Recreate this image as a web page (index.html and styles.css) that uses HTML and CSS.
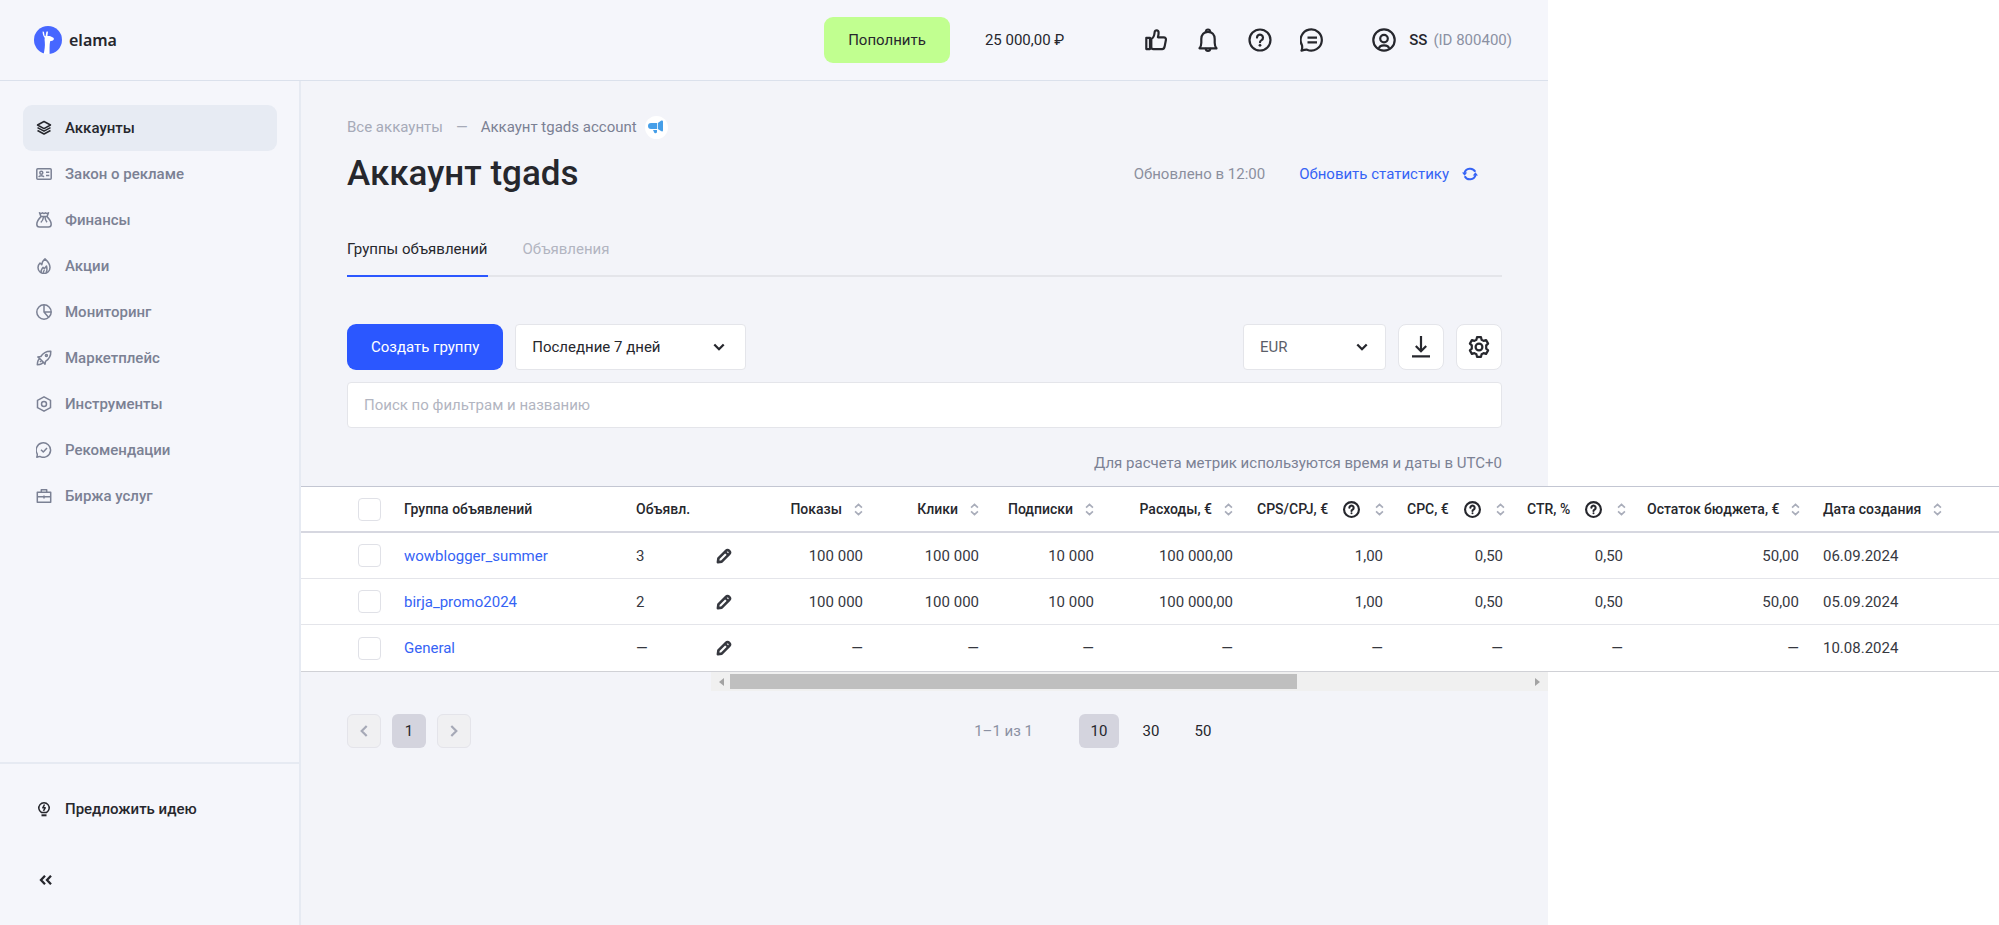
FILE: index.html
```html
<!DOCTYPE html>
<html lang="ru">
<head>
<meta charset="utf-8">
<title>Аккаунт tgads — elama</title>
<meta name="viewport" content="width=device-width, initial-scale=1">
<link rel="stylesheet" href="styles.css">
</head>
<body>
<svg class="sprite" aria-hidden="true">
  <symbol id="i-sort" viewBox="0 0 10 14"><path d="M1.200 5 5 1.400 8.800 5M1.200 9 5 12.600 8.800 9" fill="none" stroke="currentColor" stroke-width="1.900"/></symbol>
  <symbol id="i-help" viewBox="0 0 24 24"><g fill="none" stroke="currentColor" stroke-linecap="round"><circle cx="12" cy="12" r="10.500"/><path d="M9 9.600a3 3 0 1 1 4.600 2.500c-1 .6-1.600 1.100-1.600 2.100"/></g><circle cx="12" cy="17.300" r="1.400" fill="currentColor"/></symbol>
  <symbol id="i-pencil" viewBox="0 0 16 16"><path d="M2.400 10.300 9.900 2.800a2.300 2.300 0 0 1 3.300 3.300l-7.500 7.500-3.800.6z" fill="none" stroke="currentColor" stroke-width="2.600" stroke-linejoin="round"/><path d="m9 3.700 3.300 3.300" stroke="currentColor" stroke-width="2.200"/></symbol>
  <symbol id="i-down" viewBox="0 0 12 8"><path d="m1.300 1.500 4.700 4.700 4.700-4.700" fill="none" stroke="currentColor" stroke-width="2.300"/></symbol>
</svg>
<div class="app">
  <header class="topbar">
    <a class="logo" href="#">
      <svg width="28" height="28" viewBox="0 0 28 28" aria-hidden="true"><circle cx="14" cy="14" r="14" fill="#4767ff"/><path d="M9.700 28c.8-4 1.500-8 1.100-12-.1-1.600-.4-2.900 0-4C9.200 10.500 8.600 8 8.600 5.600c.7-.3 1.300.1 1.400.7l.5 3.200c.3.500.8.700 1.100.6L12.300 6c.3-.7 1.200-.6 1.700-.2l-.6 4.300c1-.3 2.100-.3 3 .2l2.600 1.200c1 .5 1.100 1.600.6 2.300-.7 1.100-2 1.200-3.500 1.500-.7 4-.5 8-.5 12.600z" fill="#fff"/></svg>
      <span>elama</span>
    </a>
    <button class="btn btn-green" type="button">Пополнить</button>
    <span class="balance">25 000,00 ₽</span>
    <nav class="quick" aria-label="Быстрые действия">
      <button class="icon-btn" type="button" aria-label="Оценить"><svg width="24" height="24" viewBox="0 0 24 24" fill="none" stroke="currentColor" stroke-width="2.200" stroke-linejoin="round"><path d="M2.300 9.800h3.700v11.300H2.300zM7.300 11c2.200-1 3-3.300 3.300-6.500.1-3 4-2.900 4 .2 0 1.800-.3 3-.7 4.600h5.800c1.700 0 2.500 1.200 2.200 2.600l-1.400 7.200c-.3 1.300-1 2-2.300 2H9.500c-1 0-1.500-.2-2.200-.7z"/></svg></button>
      <button class="icon-btn" type="button" aria-label="Уведомления"><svg width="24" height="24" viewBox="0 0 24 24" fill="none" stroke="currentColor" stroke-width="2.200" stroke-linejoin="round" stroke-linecap="round"><path d="M3.500 20.300c1.300-1.500 1.800-3 1.800-5.600V11c0-4.400 2.700-7.200 6.700-7.200s6.700 2.800 6.700 7.200v3.700c0 2.600.5 4.100 1.800 5.600z"/><path d="M10 3.600c0-2.800 4-2.800 4 0M9.800 20.800c.2 2.700 4.200 2.700 4.400 0"/></svg></button>
      <button class="icon-btn" type="button" aria-label="Помощь"><svg width="24" height="24" stroke-width="2.200"><use href="#i-help"/></svg></button>
      <button class="icon-btn" type="button" aria-label="Чат"><svg width="24" height="24" viewBox="0 0 24 24" fill="none" stroke="currentColor" stroke-width="2.200" stroke-linejoin="round"><path d="M1.500 22.600c.8-1.500.9-3 .5-5.400A10.600 10.600 0 1 1 7 21.700c-1.800-.1-3.500.3-5.500.9z"/><path d="M7.500 9.700h9.500M7.500 14.300h9.500"/></svg></button>
    </nav>
    <a class="user" href="#">
      <svg width="24" height="24" viewBox="0 0 24 24" fill="none" stroke="currentColor" stroke-width="2.200"><circle cx="12" cy="12" r="10.700"/><circle cx="12" cy="10.600" r="3.800"/><path d="M7 20.500c.6-4.300 9.400-4.300 10 0" /></svg>
      <span class="user-name">SS</span><span class="user-id">(ID 800400)</span>
    </a>
  </header>

  <aside class="sidebar">
    <nav class="menu" aria-label="Основное меню">
      <a class="menu-item active" href="#"><svg viewBox="0 0 16 16"><path d="M8 1.500 14.500 5 8 8.600 1.500 5zM1.500 7.700 8 11.200l6.500-3.500M1.500 10.500 8 14l6.500-3.500"/></svg>Аккаунты</a>
      <a class="menu-item" href="#"><svg viewBox="0 0 16 16"><rect x=".8" y="2.800" width="14.400" height="10.400" rx="1"/><circle cx="5.300" cy="6.700" r="1.500"/><path d="M2.800 11.200c.4-2 4.600-2 5 0M10 6.300h3.300M10 9.500h3.300"/></svg>Закон о рекламе</a>
      <a class="menu-item" href="#"><svg viewBox="0 0 16 16"><path d="M3.500.8c1 .8 2 .8 3 0 1 .8 2 .8 3 0 1 .8 2 .8 3 0L11 4.600c2.200 2.200 4.200 5.200 4.200 7.600 0 1.800-1 2.800-2.700 2.800h-9C1.800 15 .8 14 .8 12.200.8 9.800 2.800 6.800 5 4.600zM5 4.600h6M7.500 5c-.3 2.500-1.200 4.300-2.700 5.500M9 5c.2 2.300.9 4 2 5.300"/></svg>Финансы</a>
      <a class="menu-item" href="#"><svg viewBox="0 0 16 16"><path d="M9 .9c3.300 3 5 5.300 5 8.600a5.900 5.900 0 0 1-12 0C2 7.700 2.700 6.300 4 5l1.800 1.800C5.900 4.300 7 2.500 9 .9z"/><path d="M5.500 15C4 12 6 11 7 9.300l1.300 1.400L10.500 8c.8 3 .7 5-.5 7M7.500 15c-.3-1.500.1-2.200 1-3"/></svg>Акции</a>
      <a class="menu-item" href="#"><svg viewBox="0 0 16 16"><circle cx="8" cy="8" r="7.200"/><path d="M8 .8V8l4.700 5.500M8 8h7.200"/></svg>Мониторинг</a>
      <a class="menu-item" href="#"><svg viewBox="0 0 16 16"><path d="M14.800 1.200c.2 4.500-1.300 7.600-5.300 10.200L9 14.200 7.200 12 4 8.800 1.800 7l3-.5C7.300 2.600 10.400 1 14.800 1.200zM4 8.800c-1.700.5-2.500 2.300-2.700 5.900 3.600-.2 5.400-1 5.900-2.700M5.800 10.200 4 12"/><circle cx="10.400" cy="5.600" r="1"/></svg>Маркетплейс</a>
      <a class="menu-item" href="#"><svg viewBox="0 0 16 16"><path d="m8 .8 6.500 3.500v7.400L8 15.200l-6.500-3.500V4.300z"/><circle cx="8" cy="8" r="2.500"/></svg>Инструменты</a>
      <a class="menu-item" href="#"><svg viewBox="0 0 16 16"><path d="M.8 15.200c.5-1.200.6-2.200.4-3.400A7.200 7.200 0 1 1 4.300 14.600c-1.200-.1-2.300.1-3.500.6z"/><path d="m5 7.800 2.300 2.200L11 6"/></svg>Рекомендации</a>
      <a class="menu-item" href="#"><svg viewBox="0 0 16 16"><path d="M1.300 4.200h13.400v10H1.300zM5.300 4V1.800h5.400V4M1.300 8.800h13.400M8 7.500v3"/></svg>Биржа услуг</a>
    </nav>
    <div class="side-foot">
      <a class="menu-item dark" href="#"><svg viewBox="0 0 16 16"><path d="M5.500 11.500a5.200 5.200 0 1 1 5 0z"/><path d="M5.500 14.300h5" stroke-width="2"/><path d="M8.500 3.500 6.800 6.800h2.400L7.500 9.800"/></svg>Предложить идею</a>
      <button class="collapse" type="button" aria-label="Свернуть меню"><svg width="14" height="10" viewBox="0 0 14 10" fill="none" stroke="currentColor" stroke-width="2.300"><path d="M6 .8 2 5l4 4.200M12 .8 8 5l4 4.200"/></svg></button>
    </div>
  </aside>

  <main class="main">
    <div class="content">
      <nav class="crumbs" aria-label="Путь">
        <a href="#">Все аккаунты</a><span class="dash">—</span><span class="current">Аккаунт tgads account</span>
        <span class="badge"><svg width="16" height="14" viewBox="0 0 16 14" fill="#459ee8" aria-hidden="true"><path d="M3 3h6v6H3a3 3 0 0 1 0-6zM9.800 3l3.200-2.200c.9-.7 2-.5 2 .6v9c0 1.100-1.100 1.300-2 .6L9.800 9zM5 10h4v1.600a1.500 1.500 0 0 1-3 .4z"/></svg></span>
      </nav>
      <div class="title-row">
        <h1>Аккаунт tgads</h1>
        <span class="updated">Обновлено в 12:00</span>
        <button class="refresh" type="button">Обновить статистику
          <svg width="16" height="16" viewBox="0 0 16 16" aria-hidden="true"><path d="M2.400 7A5.900 5.900 0 0 1 13.300 5.800M13.600 9A5.900 5.900 0 0 1 2.700 10.200" fill="none" stroke="currentColor" stroke-width="2"/><path d="M0 6.500h5.200L2.600 9.800zM10.800 9.500H16l-2.600-3.300z" fill="currentColor"/></svg>
        </button>
      </div>
      <div class="tabs" role="tablist">
        <button class="tab selected" type="button" role="tab" aria-selected="true">Группы объявлений</button>
        <button class="tab" type="button" role="tab" aria-selected="false">Объявления</button>
      </div>
      <div class="toolbar">
        <button class="btn btn-blue" type="button">Создать группу</button>
        <div class="select period"><select aria-label="Период"><option>Последние 7 дней</option></select><svg width="12" height="8" aria-hidden="true"><use href="#i-down"/></svg></div>
        <div class="select currency"><select aria-label="Валюта"><option>EUR</option></select><svg width="12" height="8" aria-hidden="true"><use href="#i-down"/></svg></div>
        <button class="square" type="button" aria-label="Скачать"><svg width="20" height="22" viewBox="0 0 20 22" fill="none" stroke="currentColor" stroke-width="2.200"><path d="M10 0v15M4.800 10 10 15.200l5.200-5.200M1 20.300h18"/></svg></button>
        <button class="square" type="button" aria-label="Настройки"><svg width="22" height="22" viewBox="0 0 22 22" fill="none" stroke="currentColor" stroke-width="2.200" stroke-linejoin="round"><path d="M9 1.200h4l.6 2.600 2 1.100 2.500-.8 2 3.500-1.900 1.800v3.200l1.900 1.800-2 3.500-2.500-.8-2 1.100-.6 2.600H9l-.6-2.600-2-1.100-2.500.8-2-3.500 1.900-1.800V9.400L1.900 7.600l2-3.500 2.500.8 2-1.100z"/><circle cx="11" cy="11" r="3.400"/></svg></button>
      </div>
      <input class="search" type="search" placeholder="Поиск по фильтрам и названию" aria-label="Поиск по фильтрам и названию">
      <p class="note">Для расчета метрик используются время и даты в UTC+0</p>
    </div>

    <div class="grid-wrap">
      <table class="grid">
        <colgroup><col class="c-check"><col class="c-name"><col class="c-ads"><col class="c-edit"><col class="c-shows"><col class="c-clicks"><col class="c-subs"><col class="c-cost"><col class="c-cps"><col class="c-rate"><col class="c-rate"><col class="c-left"><col></colgroup>
        <thead>
          <tr>
            <th class="check"><input type="checkbox" aria-label="Выбрать все"></th>
            <th>Группа объявлений</th>
            <th>Объявл.</th>
            <th></th>
            <th class="num"><span class="th">Показы<svg class="sort"><use href="#i-sort"/></svg></span></th>
            <th class="num"><span class="th">Клики<svg class="sort"><use href="#i-sort"/></svg></span></th>
            <th class="num"><span class="th">Подписки<svg class="sort"><use href="#i-sort"/></svg></span></th>
            <th class="num"><span class="th">Расходы, €<svg class="sort"><use href="#i-sort"/></svg></span></th>
            <th class="num"><span class="th wide">CPS/CPJ, €<svg class="help"><use href="#i-help"/></svg><svg class="sort"><use href="#i-sort"/></svg></span></th>
            <th class="num"><span class="th wide">CPC, €<svg class="help"><use href="#i-help"/></svg><svg class="sort"><use href="#i-sort"/></svg></span></th>
            <th class="num"><span class="th wide">CTR, %<svg class="help"><use href="#i-help"/></svg><svg class="sort"><use href="#i-sort"/></svg></span></th>
            <th class="num"><span class="th">Остаток бюджета, €<svg class="sort"><use href="#i-sort"/></svg></span></th>
            <th><span class="th">Дата создания<svg class="sort"><use href="#i-sort"/></svg></span></th>
          </tr>
        </thead>
        <tbody>
          <tr>
            <td class="check"><input type="checkbox" aria-label="Выбрать wowblogger_summer"></td>
            <td><a href="#">wowblogger_summer</a></td><td>3</td>
            <td class="edit"><button type="button" aria-label="Изменить"><svg><use href="#i-pencil"/></svg></button></td>
            <td class="num">100 000</td><td class="num">100 000</td><td class="num">10 000</td><td class="num">100 000,00</td><td class="num">1,00</td><td class="num">0,50</td><td class="num">0,50</td><td class="num">50,00</td><td>06.09.2024</td>
          </tr>
          <tr>
            <td class="check"><input type="checkbox" aria-label="Выбрать birja_promo2024"></td>
            <td><a href="#">birja_promo2024</a></td><td>2</td>
            <td class="edit"><button type="button" aria-label="Изменить"><svg><use href="#i-pencil"/></svg></button></td>
            <td class="num">100 000</td><td class="num">100 000</td><td class="num">10 000</td><td class="num">100 000,00</td><td class="num">1,00</td><td class="num">0,50</td><td class="num">0,50</td><td class="num">50,00</td><td>05.09.2024</td>
          </tr>
          <tr>
            <td class="check"><input type="checkbox" aria-label="Выбрать General"></td>
            <td><a href="#">General</a></td><td>—</td>
            <td class="edit"><button type="button" aria-label="Изменить"><svg><use href="#i-pencil"/></svg></button></td>
            <td class="num">—</td><td class="num">—</td><td class="num">—</td><td class="num">—</td><td class="num">—</td><td class="num">—</td><td class="num">—</td><td class="num">—</td><td>10.08.2024</td>
          </tr>
        </tbody>
      </table>
    </div>
    <div class="scrollbar" aria-hidden="true">
      <svg width="5" height="8" viewBox="0 0 5 8"><path d="M5 0v8L0 4z" fill="#a3a3a3"/></svg>
      <div class="track"><div class="thumb"></div></div>
      <svg width="5" height="8" viewBox="0 0 5 8"><path d="M0 0v8l5-4z" fill="#a3a3a3"/></svg>
    </div>

    <div class="pager">
      <div class="pages">
        <button class="page ghost" type="button" aria-label="Назад"><svg width="8" height="12" viewBox="0 0 8 12"><path d="M6.700 1 1.700 6l5 5" fill="none" stroke="currentColor" stroke-width="2.200"/></svg></button>
        <button class="page on" type="button">1</button>
        <button class="page ghost" type="button" aria-label="Вперёд"><svg width="8" height="12" viewBox="0 0 8 12"><path d="m1.300 1 5 5-5 5" fill="none" stroke="currentColor" stroke-width="2.200"/></svg></button>
      </div>
      <span class="range">1–1 из 1</span>
      <div class="sizes">
        <button class="size on" type="button">10</button>
        <button class="size" type="button">30</button>
        <button class="size" type="button">50</button>
      </div>
    </div>
  </main>
</div>
</body>
</html>
```

FILE: styles.css
```css
:root {
  --ink: #26272d;
  --muted: #7b8194;
  --pale: #a6aab8;
  --blue: #2b57ff;
  --link: #3563f5;
  --line: #e4e5ea;
  --app-width: 1548px;
  --side: 301px;
}

* { box-sizing: border-box; }

html { overflow-x: hidden; }

body {
  margin: 0;
  background: #fff;
  color: var(--ink);
  font: 15px/20px Roboto, "Liberation Sans", sans-serif;
}

a { color: inherit; text-decoration: none; }

button, input, select {
  font: inherit;
  color: inherit;
  margin: 0;
}

button {
  padding: 0;
  border: 0;
  background: none;
  cursor: pointer;
}

svg { display: block; flex: none; }

.sprite { display: none; }

.app {
  display: grid;
  grid-template: 81px 1fr / var(--side) minmax(0, 1fr);
  max-width: var(--app-width);
  min-height: 100vh;
  background: #f5f6fb;
}

/* top bar */
.topbar {
  grid-column: 1 / -1;
  display: flex;
  align-items: center;
  padding: 0 36px 0 34px;
  border-bottom: 1px solid #dbe1ec;
}

.logo {
  display: flex;
  align-items: center;
  gap: 7px;
  margin-right: auto;
  font: 600 16px/24px "Noto Sans", sans-serif;
}

.btn {
  height: 46px;
  padding: 0 24px;
  border-radius: 9px;
}

.btn-green { background: #c1ff90; }

.btn-blue { background: var(--blue); color: #fff; }

.balance { margin: 0 80px 0 35px; }

.quick { display: flex; gap: 28px; }

.user {
  display: flex;
  align-items: center;
  margin-left: 48px;
}

.user-name { margin: 0 6px 0 13px; font-weight: 500; }

.user-id { color: #8b91a3; }

/* side menu */
.sidebar {
  display: flex;
  flex-direction: column;
  border-right: 2px solid #e6eaf2;
}

.menu { padding: 24px 22px 0 23px; }

.menu-item {
  display: flex;
  align-items: center;
  gap: 13px;
  height: 46px;
  padding-left: 13px;
  border-radius: 9px;
  color: var(--muted);
  font-weight: 500;
}

.menu-item svg {
  width: 16px;
  height: 16px;
  fill: none;
  stroke: currentColor;
  stroke-width: 1.5;
  stroke-linejoin: round;
}

.menu-item.active { background: #e7ebf3; color: var(--ink); }

.menu-item.dark { color: var(--ink); }

.side-foot {
  margin-top: auto;
  padding: 22px 22px 34px 23px;
  border-top: 2px solid #e6eaf2;
}

.collapse {
  display: block;
  margin-top: 37px;
  padding: 6px 16px;
}

/* main area */
.main {
  padding-top: 34px;
  background: #f3f4f9;
}

.content { padding: 0 46px; }

.crumbs {
  display: flex;
  align-items: center;
  height: 24px;
  color: var(--pale);
}

.crumbs .dash { margin: 0 13px; }

.crumbs .current { color: var(--muted); margin-right: 8px; }

.badge {
  display: grid;
  place-items: center;
  width: 23px;
  height: 23px;
  border-radius: 50%;
  background: #fff;
}

.title-row {
  display: flex;
  align-items: center;
  margin-top: 13px;
  padding-right: 24px;
}

h1 {
  margin: 0 auto 0 0;
  font-size: 35px;
  line-height: 44px;
  font-weight: 500;
}

.updated { color: #8b8f9e; margin-right: 34px; }

.refresh {
  display: flex;
  align-items: center;
  gap: 13px;
  color: var(--link);
}

.tabs {
  display: flex;
  gap: 35px;
  margin-top: 30px;
  border-bottom: 2px solid var(--line);
}

.tab {
  height: 51px;
  margin-bottom: -2px;
  border-bottom: 2px solid transparent;
  padding-bottom: 4px;
  color: #b2b5c1;
}

.tab.selected { color: var(--ink); border-color: var(--blue); }

.toolbar {
  display: flex;
  gap: 12px;
  margin-top: 47px;
}

.select { position: relative; height: 46px; }

.select select {
  appearance: none;
  width: 100%;
  height: 100%;
  padding: 0 40px 0 16px;
  border: 1px solid var(--line);
  border-radius: 4px;
  background: #fff;
}

.select svg {
  position: absolute;
  top: 19px;
  right: 18px;
  pointer-events: none;
}

.period { width: 231px; }

.period svg { right: 21px; }

.currency { width: 143px; margin-left: auto; color: #5b5e69; }

.currency svg { color: var(--ink); }

.square {
  display: grid;
  place-items: center;
  width: 46px;
  height: 46px;
  border: 1px solid var(--line);
  border-radius: 8px;
  background: #fff;
}

.search {
  display: block;
  appearance: none;
  width: 100%;
  height: 46px;
  margin-top: 12px;
  padding: 0 16px;
  border: 1px solid var(--line);
  border-radius: 4px;
  background: #fff;
  outline: 0;
}

.search::placeholder { color: #b2b5c1; opacity: 1; }

.note {
  margin: 0;
  padding: 25px 0 13px;
  text-align: right;
  color: var(--muted);
}

/* data grid, runs past the application column */
.grid-wrap { width: calc(100vw - var(--side)); }

.grid {
  width: 100%;
  table-layout: fixed;
  border-collapse: separate;
  border-spacing: 0;
  border-top: 1px solid #c3c6d2;
  border-bottom: 1px solid #d0d1d6;
  background: #fff;
}

.grid th, .grid td {
  height: 46px;
  padding: 0 12px;
  text-align: left;
  white-space: nowrap;
  border-bottom: 1px solid var(--line);
}

.grid th {
  font-size: 14px;
  font-weight: 500;
  border-bottom: 2px solid #d6d7e0;
}

.grid tbody tr:last-child td { border-bottom: 0; }

.grid td { color: #36383f; }

.grid td a { color: var(--link); }

.grid .num { text-align: right; }

.c-check { width: 91px; }
.c-name { width: 232px; }
.c-ads { width: 76px; }
.c-edit { width: 48px; }
.c-shows { width: 127px; }
.c-clicks { width: 116px; }
.c-subs { width: 115px; }
.c-cost { width: 139px; }
.c-cps { width: 150px; }
.c-rate { width: 120px; }
.c-left { width: 176px; }

.grid .check { padding: 0 0 0 57px; }

.check input {
  appearance: none;
  display: block;
  width: 23px;
  height: 23px;
  border: 1px solid #e0e1e7;
  border-radius: 4px;
  background: #fff;
}

.th { display: inline-flex; align-items: center; gap: 12px; }

.th.wide { gap: 15px; }

.sort { width: 9px; height: 13px; color: #a9adba; }

.help { width: 17px; height: 17px; stroke-width: 3; }

.edit button { display: block; margin: 0 auto; }

.edit svg { width: 16px; height: 16px; }

.scrollbar {
  display: flex;
  align-items: center;
  gap: 6px;
  margin-left: 410px;
  height: 19px;
  padding: 0 8px;
  background: #f0f0f0;
}

.track { flex: 1; }

.thumb { width: 71%; height: 15px; background: #bfbfbf; }

/* pager */
.pager {
  display: flex;
  align-items: center;
  margin-top: 23px;
  padding: 0 46px;
}

.pages { display: flex; gap: 11px; }

.page {
  display: grid;
  place-items: center;
  width: 34px;
  height: 34px;
  border-radius: 6px;
}

.ghost {
  border: 1px solid #e4e4ea;
  background: #f0f0f2;
  color: #a6a9b7;
}

.on { background: #d4d4de; }

.range { margin-left: auto; color: #8b91a3; }

.sizes {
  display: flex;
  gap: 12px;
  margin: 0 279px 0 46px;
}

.size {
  width: 40px;
  height: 34px;
  border-radius: 6px;
}
```
